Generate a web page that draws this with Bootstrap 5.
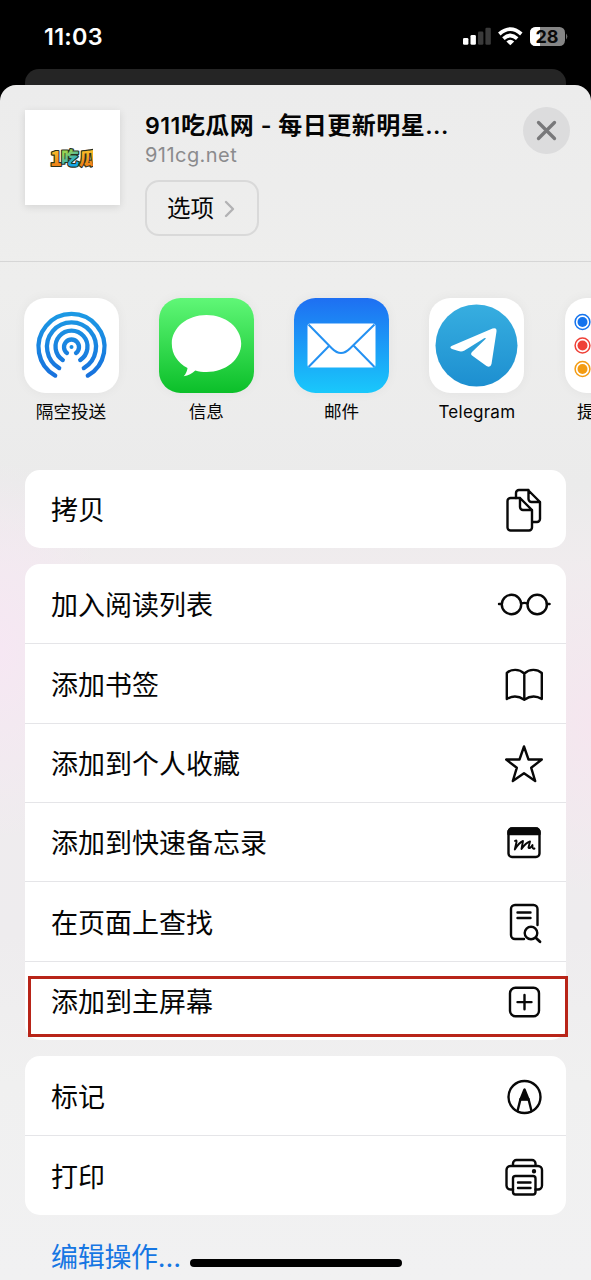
<!DOCTYPE html>
<html lang="zh-CN">
<head>
<meta charset="utf-8">
<meta name="viewport" content="width=device-width, initial-scale=1">
<title>分享</title>
<link href="https://cdn.jsdelivr.net/npm/bootstrap@5.3.0/dist/css/bootstrap.min.css" rel="stylesheet">
<style>
html,body{height:1280px;overflow:hidden}
body{background:#000;color:#050505;font-family:Inter,"Noto Sans CJK SC",sans-serif}
svg{display:block;flex:none}
.phone{width:591px;height:1280px;overflow:hidden}
.status{height:85px;padding:22px 23px 0 44px;color:#fff}
.clock{font-size:23.4px;font-weight:600;line-height:30px;letter-spacing:.25px}
.behind{left:25px;right:25px;top:69px;height:30px;background:#252525;border-radius:14px 14px 0 0}
.sheet{height:1195px;border-radius:16px 16px 0 0;overflow:hidden;
 background:radial-gradient(ellipse 110px 190px at 0 565px,#f6e7f3 0,#f6e7f300 100%),radial-gradient(ellipse 110px 170px at 591px 640px,#f5e6ef 0,#f5e6ef00 100%),linear-gradient(#ececec 0,#eeeeed 200px,#ebebeb 400px,#f0ecee 480px,#eeecee 850px,#f0f0f0 1000px,#f1f1f2 100%)}
.head{height:177px;padding:25px 21px 0 25px;border-bottom:1.5px solid #d6d6d6}
.thumb{width:95px;height:95px;background:#fff;box-shadow:0 2px 8px #0000001c}
.info{margin-left:25px;margin-top:-1.5px;flex:1}
.ttl{font-size:23.2px;font-weight:600;line-height:30px;white-space:nowrap;letter-spacing:.48px}
.ttl .cn{font-family:"Noto Sans CJK SC",sans-serif;font-size:24px}
.site{font-size:20px;line-height:28px;color:#8b8b8d;margin-top:0;letter-spacing:.45px}
.opt{width:113.5px;height:56px;border:2px solid #d9d9d9;border-radius:14px;font-size:23.5px;margin-top:11px;padding:2px 0 0 20px;line-height:1}
.opt,.opt:hover{color:#050505}
.close-btn{width:47px;height:47px;margin-top:-3px;background:#dcdcdd}
.apps{gap:40.3px;padding:36px 0 0 23.5px;height:207.5px}
.app-item{width:95px;flex:none}
.tile{width:95px;height:95px;border-radius:21.5px;background:#fff;box-shadow:0 0 12px #0000000c}
.green{background:linear-gradient(#60f777,#0bbf29)}
.blue{background:linear-gradient(#1e6ff2,#19c8fb)}
.app-name{font-size:17.6px;line-height:24px;margin-top:7px;white-space:nowrap}
.lat{font-size:17px;letter-spacing:.25px}
.group{margin:0 25.5px 16px 25px;border-radius:15px;background:#fff}
.line{height:79.35px;padding:2.5px 12px 0 26px;font-size:27px;line-height:40px}
.group:first-of-type .line{height:78.5px}
.line span{padding-top:1.5px}
.line+.line{border-top:1.4px solid #e5e5e8}
.line svg{width:60px;height:60px;fill:none;stroke:#080808;stroke-width:2.4;stroke-linecap:round;stroke-linejoin:round}
.red-box{left:3px;right:-2.5px;top:14px;height:61.5px;border:3px solid #b82418}
.edit{padding-left:51px;font-size:27px;line-height:40px;color:#1676e3;margin-top:23.5px;letter-spacing:-.3px}
.home{left:190px;top:1259px;width:211.5px;height:8px;border-radius:4px;background:#000}
</style>
</head>
<body>
<div class="phone position-relative">
 <header class="status d-flex justify-content-between align-items-start">
  <span class="clock">11:03</span>
   <svg width="106" height="30" viewBox="462 22 106 30">
    <g fill="#fff"><rect x="463" y="38" width="5.400" height="6.800" rx="1.300"/><rect x="470.500" y="35" width="5.400" height="9.800" rx="1.300"/></g>
    <g fill="#3a3a3a"><rect x="478" y="31.500" width="5.400" height="13.300" rx="1.300"/><rect x="485.400" y="27.800" width="5.400" height="17" rx="1.300"/></g>
    <g fill="none" stroke="#fff" stroke-width="3.700"><path d="M499.300 34q11-9.800 22 0"/><path d="M503.400 38.600q6.900-6.200 13.800 0"/></g><path d="M506.400 41.400q3.900-3.500 7.800 0l-3.900 3.800z" fill="#fff"/>
    <rect x="530" y="27" width="35" height="19" rx="5.500" fill="#858585"/><path d="M540 27h-4.500a5.500 5.500 0 0 0-5.500 5.500v8a5.500 5.500 0 0 0 5.500 5.500h4.500z" fill="#fff"/><path d="M566.200 33.500q2.200 3 0 6z" fill="#858585"/>
    <text x="547" y="43" text-anchor="middle" font-family="Inter" font-size="18" font-weight="700" fill="#0a0a0a">28</text>
   </svg>
 </header>
 <div class="behind position-absolute"></div>
 <main class="sheet position-relative">
  <header class="head d-flex">
   <div class="thumb">
    <svg width="95" height="95" viewBox="0 0 95 95">
     <defs><linearGradient id="lg" x2="0" y2="1"><stop offset=".2" stop-color="#fac62b"/><stop offset="1" stop-color="#e96a10"/></linearGradient><linearGradient id="lb" x2="1" y2="1"><stop offset=".35" stop-color="#97d252"/><stop offset=".6" stop-color="#14a5e5"/></linearGradient><clipPath id="lc"><path d="M20 30h48v35H20z"/></clipPath></defs>
     <g clip-path="url(#lc)" font-family="Noto Sans CJK SC" font-weight="900" stroke="#27301d" stroke-width="2.200" paint-order="stroke" stroke-linejoin="round"><text x="25" y="55.500" font-size="20" fill="url(#lg)">1<tspan x="36" y="54.500" font-size="18" fill="url(#lb)">吃</tspan><tspan x="54" y="54.500" font-size="18">瓜</tspan></text></g>
    </svg>
   </div>
   <div class="info">
    <div class="ttl">911<span class="cn">吃瓜网</span> - <span class="cn">每日更新明星</span>...</div>
    <div class="site">911cg.net</div>
    <button class="btn opt d-flex align-items-center">选项<svg class="ms-2" width="18" height="20" viewBox="0 0 18 20" fill="none" stroke="#b2b2b4" stroke-width="2.400" stroke-linecap="round" stroke-linejoin="round"><path d="m4 3 7 7-7 7"/></svg></button>
   </div>
   <div class="close-btn rounded-circle"><svg width="47" height="47" viewBox="0 0 47 47" stroke="#78787a" stroke-width="3.300" stroke-linecap="round"><path d="m15.500 15.500 16 16m0-16-16 16"/></svg></div>
  </header>
  <div class="apps d-flex">
   <div class="app-item d-flex flex-column align-items-center"><div class="tile"><svg width="95" height="95" viewBox="0 0 95 95" fill="none" stroke="url(#ad)" stroke-width="4.300" stroke-linecap="round"><defs><linearGradient id="ad" gradientUnits="userSpaceOnUse" x1="0" y1="14" x2="0" y2="80"><stop stop-color="#1c9ae4"/><stop offset="1" stop-color="#1770dd"/></linearGradient></defs><path d="M31.200 77.600a33 33 0 1 1 32.600 0"/><path d="M35.200 70.100a24.500 24.500 0 1 1 24.600 0"/><path d="M38.800 62.100a16 16 0 1 1 17.400 0"/><path d="M43 55a7.500 7.500 0 1 1 9 0"/><circle cx="47.500" cy="49" r="2" fill="#168be1" stroke="none"/></svg></div><div class="app-name">隔空投送</div></div>
   <div class="app-item d-flex flex-column align-items-center"><div class="tile green"><svg width="95" height="95" viewBox="0 0 95 95"><path fill="#fff" d="M47.500 17c19.300 0 34.700 12.700 34.700 28.500S66.800 74 47.500 74c-4 0-7.800-.5-11.200-1.500-3 2.900-7 5-11.600 5.800 2.200-2.700 3.500-5.300 3.800-8.400C18.700 65 12.800 56.200 12.800 45.500 12.800 29.700 28.200 17 47.500 17z"/></svg></div><div class="app-name">信息</div></div>
   <div class="app-item d-flex flex-column align-items-center"><div class="tile blue"><svg width="95" height="95" viewBox="0 0 95 95"><rect x="13.500" y="25.500" width="68" height="44" rx="2.500" fill="#fff"/><path d="m14.500 26.500 23.500 24q9 9 18 0l24.500-24M14.500 69l20.500-21m45.500 21-20.500-21" fill="none" stroke="#2491f2" stroke-width="2"/></svg></div><div class="app-name">邮件</div></div>
   <div class="app-item d-flex flex-column align-items-center"><div class="tile"><svg width="95" height="95" viewBox="0 0 95 95"><defs><linearGradient id="tg" x2="0" y2="1"><stop stop-color="#37aee0"/><stop offset="1" stop-color="#1d8fd0"/></linearGradient></defs><circle cx="47.500" cy="47.500" r="41" fill="url(#tg)"/><path fill="#fff" d="M22.500 48 63.500 30.500q4.500-1.500 4 3l-5 32.500q-1 4-5 2L43 57.500q-1.800-1.500 0-3.500l14-13.500q-1-1-3 .5L35.500 52.500q-3 1.500-6 .5l-6.500-2q-3-1.500-.5-3z"/></svg></div><div class="app-name lat">Telegram</div></div>
   <div class="app-item d-flex flex-column align-items-center"><div class="tile"><svg width="95" height="95" viewBox="0 0 95 95"><g fill="none" stroke-width="1.500"><circle cx="17.500" cy="24" r="7.400" stroke="#1473ed"/><circle cx="17.500" cy="47.500" r="7.400" stroke="#ef4037"/><circle cx="17.500" cy="71" r="7.400" stroke="#f39b12"/></g><circle cx="17.500" cy="24" r="5" fill="#1473ed"/><circle cx="17.500" cy="47.500" r="5" fill="#ef4037"/><circle cx="17.500" cy="71" r="5" fill="#f39b12"/></svg></div><div class="app-name">提醒事项</div></div>
  </div>
  <section class="group"><div class="line d-flex align-items-center justify-content-between"><span>拷贝</span>
   <svg viewBox="0 0 60 60"><path d="M22 18v-5a3 3 0 0 1 3-3h9l12 12v17a3 3 0 0 1-3 3h-4M34.500 10v9a3 3 0 0 0 3 3H46"/><path d="M16.500 18H26l12 12v17.500a3 3 0 0 1-3 3H16.500a3 3 0 0 1-3-3V21a3 3 0 0 1 3-3zM26 18v9a3 3 0 0 0 3 3h9"/></svg></div></section>
  <section class="group">
   <div class="line d-flex align-items-center justify-content-between"><span>加入阅读列表</span><svg viewBox="0 0 60 60"><circle cx="17.500" cy="29.500" r="9.700"/><circle cx="43.200" cy="29.500" r="9.700"/><path d="M27.200 28.500q3.200-1.300 6.300 0M5 29h2.800m45 0h2.800"/></svg></div>
   <div class="line d-flex align-items-center justify-content-between"><span>添加书签</span><svg viewBox="0 0 60 60"><path d="M30.300 18.500C25 13.800 17.500 13.800 12.800 18v26c5.500-3.300 11.500-3.300 17.500.7 6-4 12-4 17.500-.7V18c-4.700-4.200-12.200-4.200-17.500.5zv26"/></svg></div>
   <div class="line d-flex align-items-center justify-content-between"><span>添加到个人收藏</span><svg viewBox="0 0 60 60"><path d="m30 12.500 4.500 13h13.300L37.200 33.800 41.200 47 30 39.200 18.800 47l4-13.200L12.200 25.500h13.300z"/></svg></div>
   <div class="line d-flex align-items-center justify-content-between"><span>添加到快速备忘录</span><svg viewBox="0 0 60 60"><rect x="14.500" y="15.500" width="31" height="28.500" rx="3.500"/><path d="M14.500 21v-2a3.500 3.500 0 0 1 3.500-3.500h24A3.500 3.500 0 0 1 45.500 19v2z" fill="#080808"/><path d="M21 28q2-1.500 1.500 1l-1.700 7.500q4.200-7 8.200-8.500l-1.500 8q4.500-6.500 8.500-7.500l-1.500 6q1 2 4-2.500-.5 4.500 2 3.500" stroke-width="1.900"/></svg></div>
   <div class="line d-flex align-items-center justify-content-between"><span>在页面上查找</span><svg viewBox="0 0 60 60"><path d="M30 46h-9a4 4 0 0 1-4-4V16a4 4 0 0 1 4-4h18.500a4 4 0 0 1 4 4v16M23.500 19.500h13m-13 5.500h13"/><circle cx="37" cy="40" r="6.300"/><path d="m42 45 4 3.800" stroke-width="2.800"/></svg></div>
   <div class="line d-flex align-items-center justify-content-between position-relative"><span>添加到主屏幕</span><svg viewBox="0 0 60 60"><rect x="16" y="15.700" width="29" height="28.600" rx="5.500"/><path d="M30.500 23v14.200m-7-7.100h14"/></svg><div class="red-box position-absolute"></div></div>
  </section>
  <section class="group mb-0">
   <div class="line d-flex align-items-center justify-content-between"><span>标记</span><svg viewBox="0 0 60 60"><circle cx="30.500" cy="30" r="16"/><path d="m23.500 44 3-12h8l3 12"/><path d="m30.500 22.500-4 10h8z" fill="#080808"/></svg></div>
   <div class="line d-flex align-items-center justify-content-between"><span>打印</span><svg viewBox="0 0 60 60"><path d="M19 42.500h-2.500a4 4 0 0 1-4-4V23a4 4 0 0 1 4-4h27.500a4 4 0 0 1 4 4v15.500a4 4 0 0 1-4 4h-2.500M19 19v-2.500a3.500 3.500 0 0 1 3.500-3.500H38a3.500 3.500 0 0 1 3.500 3.500V19"/><rect x="19" y="29" width="22.500" height="18.500" rx="2.500"/><path d="M24 35.500h12.500M24 41h12.500"/><circle cx="40" cy="24.200" r="1" fill="#080808"/></svg></div>
  </section>
  <div class="edit">编辑操作…</div>
 </main>
 <div class="home position-absolute"></div>
</div>
<script src="https://cdn.jsdelivr.net/npm/bootstrap@5.3.0/dist/js/bootstrap.bundle.min.js"></script>
</body>
</html>
